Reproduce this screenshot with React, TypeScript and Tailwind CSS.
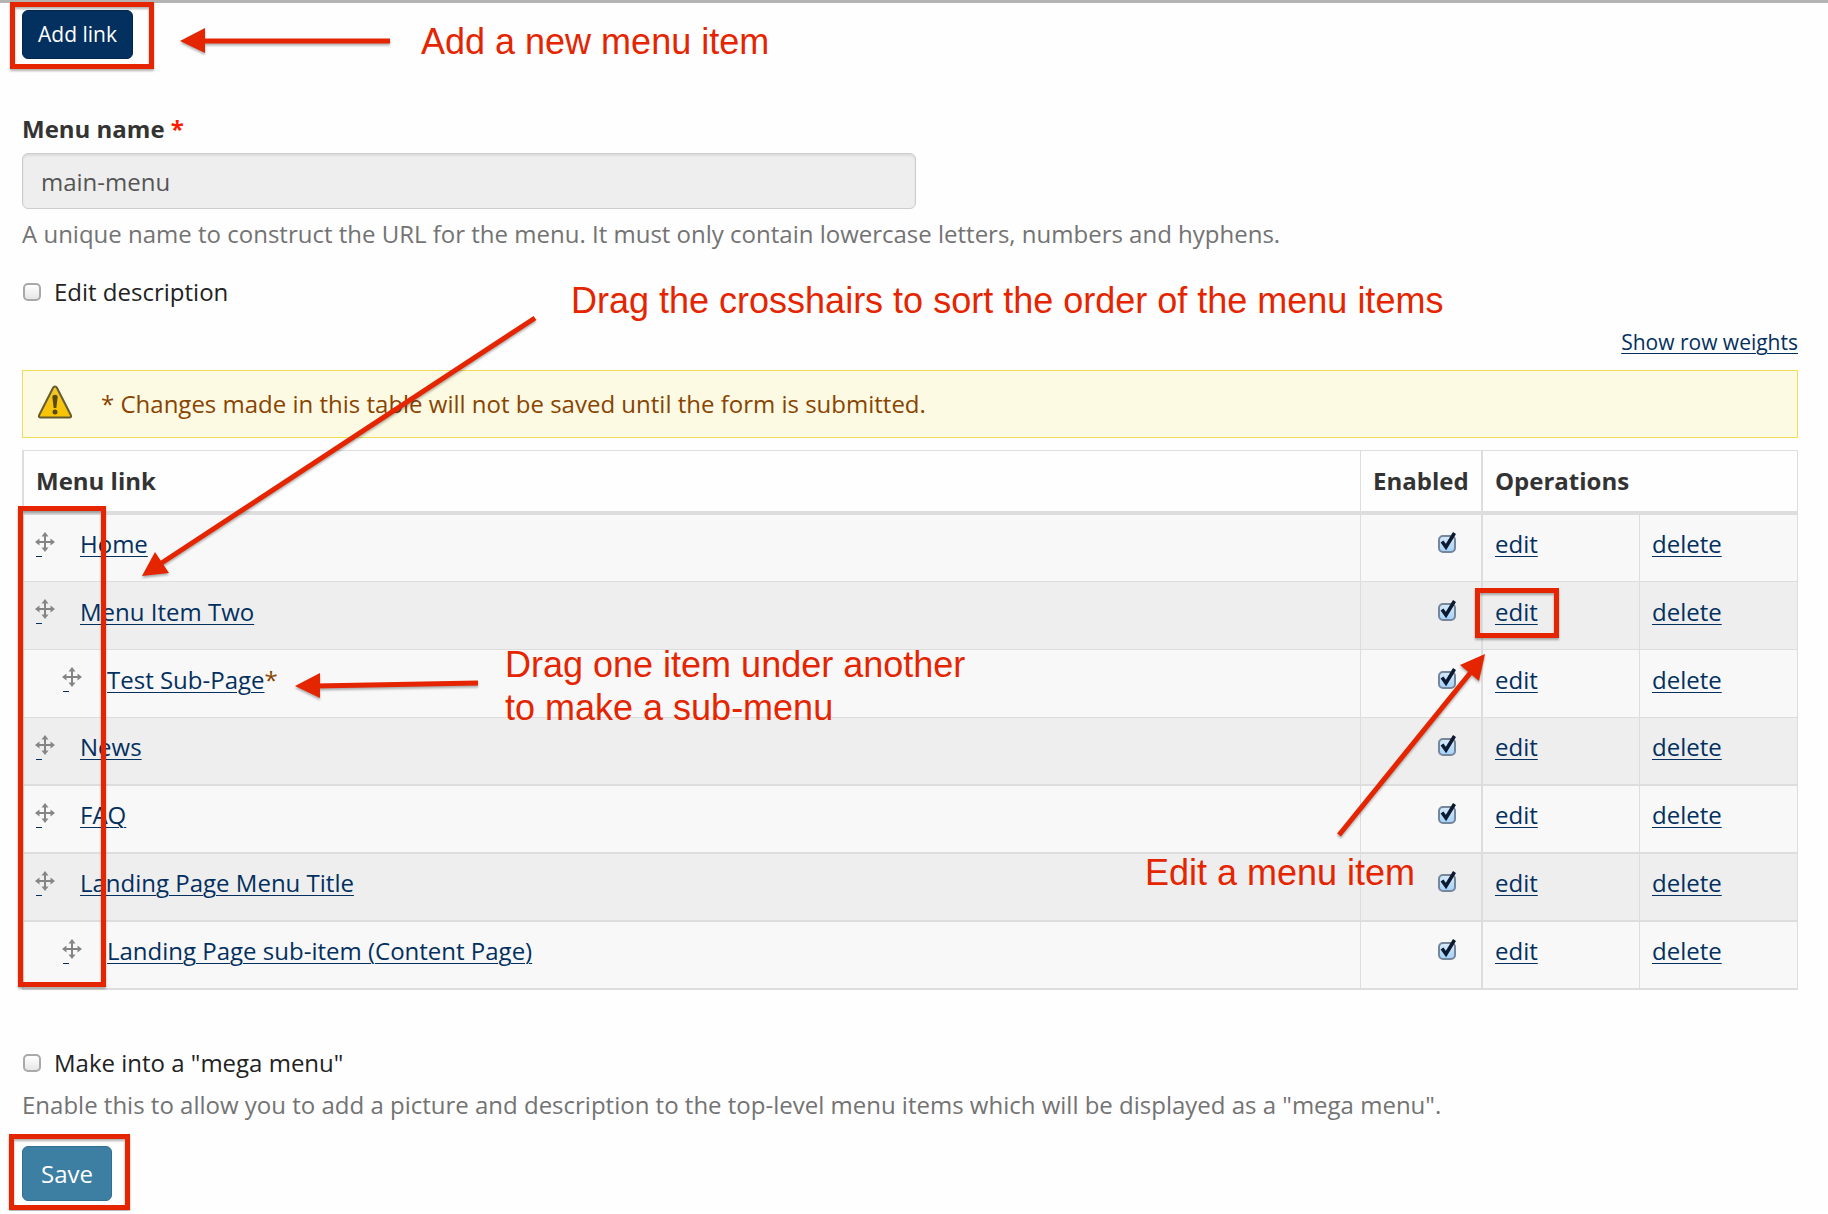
import React, { useState } from "react";

interface MenuItem {
  id: string;
  title: string;
  indent?: boolean;
  changed?: boolean;
  highlightEdit?: boolean;
}

const MENU_ITEMS: MenuItem[] = [
  { id: "home", title: "Home" },
  { id: "two", title: "Menu Item Two", highlightEdit: true },
  { id: "test", title: "Test Sub-Page", indent: true, changed: true },
  { id: "news", title: "News" },
  { id: "faq", title: "FAQ" },
  { id: "landing", title: "Landing Page Menu Title" },
  { id: "landing-sub", title: "Landing Page sub-item (Content Page)", indent: true },
];

const LINK = "text-[#03305f] underline underline-offset-3 decoration-1";
const OUTLINE = "absolute border-5 border-[#e42500] drop-shadow-[0_2px_1px_rgba(0,0,0,0.3)] pointer-events-none";
const NOTE = "absolute whitespace-nowrap font-['Liberation_Sans',Arial,sans-serif] text-[36px] leading-[43px] text-[#e42500] pointer-events-none";

function MoveIcon() {
  return (
    <svg className="w-5 h-5" viewBox="0 0 20 20" fill="#858585" aria-hidden="true">
      <path d="M9 3h2v6h6v2h-6v6H9v-6H3V9h6z" />
      <path d="M10 0l3.500 4.500h-7zM10 20l-3.500-4.500h7zM0 10l4.500-3.500v7zM20 10l-4.500 3.500v-7z" />
    </svg>
  );
}

function WarningIcon() {
  return (
    <svg className="w-9 h-9 mb-1 shrink-0" viewBox="0 0 36 36" aria-hidden="true">
      <defs>
        <linearGradient id="warn" x1="0" y1="0" x2="0" y2="1">
          <stop offset="0" stopColor="#efc62c" />
          <stop offset="1" stopColor="#fac400" />
        </linearGradient>
      </defs>
      <path
        d="M18 2.500c.9 0 1.500.5 1.900 1.300l14 27.500c.6 1.300 0 2.200-1.400 2.200h-29c-1.400 0-2-.9-1.400-2.200l14-27.500c.4-.8 1-1.300 1.900-1.300z"
        fill="url(#warn)"
        stroke="#665c30"
        strokeWidth="2"
      />
      <path d="M15.300 13c0-3 5.400-3 5.400 0l-1.400 11h-2.600z" fill="#5a4a0a" />
      <circle cx="18" cy="28" r="2.500" fill="#5a4a0a" />
    </svg>
  );
}

interface CheckboxProps {
  id?: string;
  label?: string;
  initial?: boolean;
}

function Checkbox({ id, label, initial = false }: CheckboxProps) {
  const [checked, setChecked] = useState(initial);

  return (
    <span className="relative inline-block w-[18px] h-[18px] shrink-0">
      <input
        id={id}
        type="checkbox"
        aria-label={label}
        checked={checked}
        onChange={(e) => setChecked(e.target.checked)}
        className="block appearance-none w-[18px] h-[18px] rounded-[5px] border-2 border-[#a9a9a9] bg-linear-to-b from-white to-[#e6e6e6] checked:border-[#76869b] checked:from-[#d4e8fa] checked:to-[#a5d3fa]"
      />
      {checked && (
        <svg className="absolute -top-1 left-0 w-5 h-5 pointer-events-none" viewBox="0 0 20 20" aria-hidden="true">
          <path d="M4 10.500l4 5.500L16.500 2" fill="none" stroke="#0b1a30" strokeWidth="3.500" />
        </svg>
      )}
    </span>
  );
}

interface ArrowProps {
  className: string;
  width: number;
  height: number;
  line: string;
  head: string;
}

function Arrow({ className, width, height, line, head }: ArrowProps) {
  return (
    <svg
      className={"absolute overflow-visible pointer-events-none drop-shadow-[0_2px_1px_rgba(0,0,0,0.3)] " + className}
      width={width}
      height={height}
      viewBox={"0 0 " + width + " " + height}
      aria-hidden="true"
    >
      <path d={line} stroke="#e42500" strokeWidth="5" fill="none" />
      <path d={head} fill="#e42500" />
    </svg>
  );
}

function MenuTable() {
  return (
    <table className="w-full table-fixed border-separate border-spacing-0 border-l-2 border-[#dddddd] text-left">
      <colgroup>
        <col />
        <col className="w-[121px]" />
        <col className="w-[158px]" />
        <col className="w-[159px]" />
      </colgroup>
      <thead>
        <tr className="h-[65px] text-[#333333]">
          <th className="border-t border-b-4 border-[#dddddd] px-3 font-bold">Menu link</th>
          <th className="border-t border-b-4 border-l border-[#dddddd] px-3 font-bold">Enabled</th>
          <th colSpan={2} className="border-t border-b-4 border-l-2 border-r border-[#dddddd] px-3 font-bold">
            Operations
          </th>
        </tr>
      </thead>
      <tbody className="[&_td]:border-b [&_td]:border-[#dddddd] [&_td]:pb-2 [&>tr:nth-child(n+4)>td]:border-b-2">
        {MENU_ITEMS.map((item) => (
          <tr key={item.id} className="h-[68px] first:h-[67px] odd:bg-[#f8f8f8] even:bg-[#eeeeee]">
            <td className="px-3">
              <div className={item.indent ? "flex items-center pl-[27px]" : "flex items-center"}>
                <a href="#move" aria-label={"Move " + item.title} className="flex flex-col w-11 shrink-0">
                  <span className="-ml-px">
                    <MoveIcon />
                  </span>
                  <span className="w-1.5 mt-1 border-b border-[#03305f]" />
                </a>
                <a href="#item" className={LINK}>{item.title}</a>
                {item.changed && <span className="text-[#884400]">*</span>}
              </div>
            </td>
            <td className="border-l pr-[25px]">
              <div className="flex justify-end">
                <Checkbox label={"Enable " + item.title} initial />
              </div>
            </td>
            <td className="relative border-l-2 px-3">
              <a href="#edit" className={LINK}>edit</a>
              {item.highlightEdit && <div className={OUTLINE + " -left-2 top-1.5 w-[84px] h-[50px]"} />}
            </td>
            <td className="border-x px-3">
              <a href="#delete" className={LINK}>delete</a>
            </td>
          </tr>
        ))}
      </tbody>
    </table>
  );
}

export default function App() {
  return (
    <div className="relative bg-[#fefefe] border-t-3 border-[#b4b4b4] pl-[22px] pr-[30px] pt-[7px] pb-[10px] font-['Open_Sans',sans-serif] text-[24px] leading-[34px] text-[#222222]">
      <div className="relative w-fit">
        <button
          type="button"
          className="block h-[49px] px-[15px] pb-0.5 rounded-md border border-[#02264b] bg-[#03305f] text-[21px] text-white"
        >
          Add link
        </button>
        <div className={OUTLINE + " -left-3 -top-2 w-[144px] h-[67px]"} />
      </div>

      <label htmlFor="menu-name" className="block mt-[53px] font-bold text-[#333333]">
        Menu name <span className="text-[#ff1a00]">*</span>
      </label>
      <input
        id="menu-name"
        type="text"
        disabled
        defaultValue="main-menu"
        className="block mt-[7px] w-[894px] max-w-full h-14 px-[18px] rounded-md border border-[#cccccc] bg-[#eeeeee] text-[#555555] shadow-[inset_0_2px_2px_rgba(0,0,0,0.08)]"
      />
      <p className="mt-2 text-[#737373]">
        A unique name to construct the URL for the menu. It must only contain lowercase letters, numbers and hyphens.
      </p>

      <div className="flex items-center gap-[13px] mt-6 pl-px">
        <Checkbox id="edit-description" />
        <label htmlFor="edit-description">Edit description</label>
      </div>

      <div className="mt-4 text-right text-[21px]">
        <a href="#weights" className={LINK}>Show row weights</a>
      </div>

      <div className="flex items-center gap-7 h-[68px] mt-[11px] px-[14px] border border-[#eedd55] bg-[#fdfae3] text-[#884400]">
        <WarningIcon />
        <span>* Changes made in this table will not be saved until the form is submitted.</span>
      </div>

      <div className="relative mt-3">
        <MenuTable />
        <div className={OUTLINE + " -left-1 top-14 w-[88px] h-[481px]"} />
      </div>

      <div className="flex items-center gap-[13px] mt-14 pl-px">
        <Checkbox id="mega-menu" />
        <label htmlFor="mega-menu">Make into a "mega menu"</label>
      </div>
      <p className="mt-2 text-[#737373]">
        Enable this to allow you to add a picture and description to the top-level menu items which will be displayed as
        a "mega menu".
      </p>

      <div className="relative w-fit mt-6">
        <button type="submit" className="block h-[55px] px-[18px] rounded-md border border-[#336f8f] bg-[#3c7fa3] text-white">
          Save
        </button>
        <div className={OUTLINE + " -left-[13px] -top-3 w-[121px] h-[76px]"} />
      </div>

      {/* Callouts */}
      <Arrow className="left-[180px] top-[25px]" width={210} height={25} line="M20 13H210" head="M0 13L25 0V25z" />
      <div className={NOTE + " left-[421px] top-[17px]"}>Add a new menu item</div>

      <Arrow className="left-[142px] top-[315px]" width={393} height={258} line="M18 246L393 0" head="M0 258L13 234L27 255z" />
      <div className={NOTE + " left-[571px] top-[276px]"}>Drag the crosshairs to sort the order of the menu items</div>

      <Arrow className="left-[295px] top-[670px]" width={183} height={25} line="M20 13L183 10" head="M0 13L25 0V25z" />
      <div className={NOTE + " left-[505px] top-[640px]"}>
        Drag one item under another
        <br />
        to make a sub-menu
      </div>

      <Arrow className="right-[343px] top-[651px]" width={146} height={181} line="M0 181L132 18" head="M146 0L121 11L140 27z" />
      <div className={NOTE + " right-[413px] top-[848px]"}>Edit a menu item</div>
    </div>
  );
}
